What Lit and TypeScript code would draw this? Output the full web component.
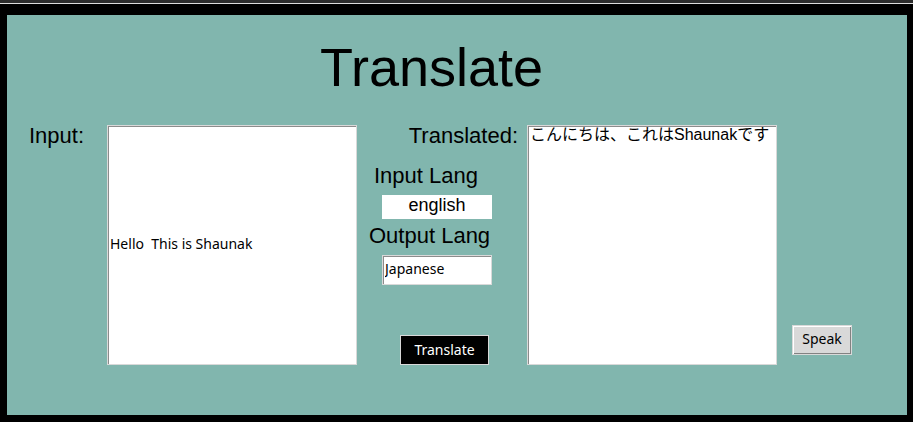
import { LitElement, html, css } from "lit";
import { customElement, state } from "lit/decorators.js";

@customElement("app-root")
class AppRoot extends LitElement {
  @state() private source = "Hello  This is Shaunak";
  @state() private translated = "こんにちは、これはShaunakです";
  @state() private inputLang = "english";
  @state() private outputLang = "Japanese";

  static styles = css`
    :host {
      display: block;
      min-height: 100vh;
      box-sizing: border-box;
      padding-bottom: 7px;
      background: #000;
      color: #000;
      font-family: "Liberation Sans", "Noto Sans CJK JP", sans-serif;
    }
    * {
      box-sizing: border-box;
    }
    .titlebar {
      height: 4px;
      background: #2c2c2c;
      border-bottom: 1px solid #dcdcdc;
    }
    .panel {
      margin: 11px 6px 0 7px;
      min-height: 400px;
      padding: 21px 0 50px;
      background: #81b6ae;
    }
    .title {
      margin: 0 51px 27px 0;
      font-size: 54px;
      line-height: 62px;
      font-weight: 400;
      text-align: center;
    }
    .board {
      display: grid;
      grid-template-columns: 100px 1fr 170px 1fr 130px;
      min-height: 240px;
    }
    .label {
      display: block;
      padding-top: 1px;
      font-size: 22px;
      line-height: 20px;
      white-space: nowrap;
    }
    .source-label {
      padding-left: 22px;
    }
    .field {
      display: block;
      width: 100%;
      min-width: 0;
      margin: 0;
      padding: 0 2px 4px;
      border: 1px solid #d9d9d9;
      border-radius: 0;
      outline: none;
      background: #fff;
      color: #000;
      box-shadow: inset 1px 1px #8c8c8c;
      font-family: "Noto Sans", sans-serif;
      font-size: 14px;
    }
    .source {
      height: 100%;
    }
    .result {
      height: 100%;
      padding: 0 2px;
      resize: none;
      font-family: "Liberation Sans", "Noto Sans CJK JP", sans-serif;
      font-size: 16px;
      line-height: 18px;
    }
    .middle {
      display: flex;
      flex-direction: column;
    }
    .result-label {
      padding-right: 9px;
      margin-bottom: 19px;
      text-align: right;
    }
    .input-lang-label {
      padding-left: 17px;
      margin-bottom: 9px;
    }
    .output-lang-label {
      padding-left: 12px;
      margin-bottom: 9px;
    }
    .lang {
      width: 110px;
      height: 30px;
      margin-left: 25px;
    }
    .plain {
      height: 24px;
      margin-bottom: 6px;
      padding: 0 0 4px;
      border: 0;
      box-shadow: none;
      font-family: "Liberation Sans", sans-serif;
      font-size: 18px;
      text-align: center;
    }
    .button {
      height: 30px;
      padding: 0;
      border: 1px solid #d9d9d9;
      border-radius: 0;
      font-family: "Noto Sans", sans-serif;
      font-size: 14px;
      line-height: 20px;
    }
    .translate {
      width: 89px;
      margin: 50px 0 0 43px;
      background: #000;
      color: #fff;
    }
    .side {
      display: flex;
      align-items: flex-end;
      padding: 0 0 10px 15px;
    }
    .speak {
      width: 60px;
      padding-bottom: 2px;
      background: #d9d9d9;
      color: #000;
      box-shadow: inset 1px 1px #fff, inset -1px -1px #828282;
    }
  `;

  render() {
    return html`
      <div class="titlebar"></div>
      <main class="panel">
        <h1 class="title">Translate</h1>
        <div class="board">
          <label class="label source-label" for="source">Input:</label>
          <input class="field source" id="source" type="text" .value=${this.source} />
          <div class="middle">
            <label class="label result-label" for="result">Translated:</label>
            <label class="label input-lang-label" for="input-lang">Input Lang</label>
            <input class="field lang plain" id="input-lang" type="text" readonly .value=${this.inputLang} />
            <label class="label output-lang-label" for="output-lang">Output Lang</label>
            <input class="field lang" id="output-lang" type="text" .value=${this.outputLang} />
            <button class="button translate" type="button">Translate</button>
          </div>
          <textarea class="field result" id="result" .value=${this.translated}></textarea>
          <div class="side">
            <button class="button speak" type="button">Speak</button>
          </div>
        </div>
      </main>
    `;
  }
}
